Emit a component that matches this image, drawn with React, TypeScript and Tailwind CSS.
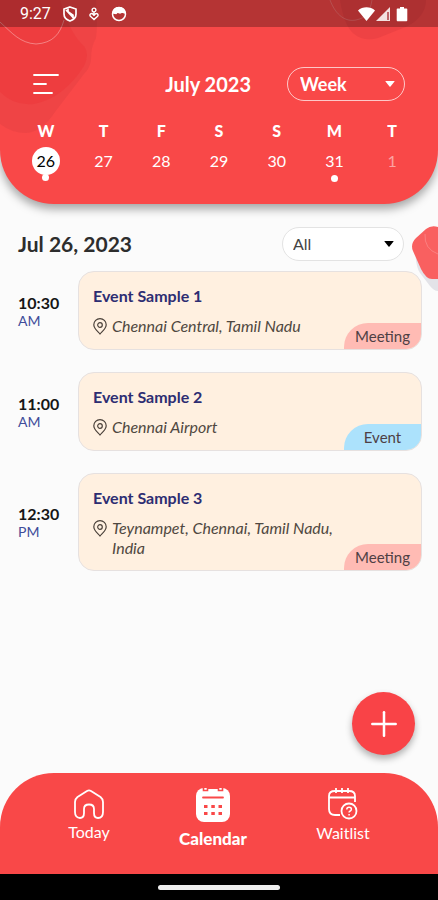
import { Plus } from "lucide-react";

const days = [
  { letter: "W", date: 26, active: true, dot: true },
  { letter: "T", date: 27 },
  { letter: "F", date: 28 },
  { letter: "S", date: 29 },
  { letter: "S", date: 30 },
  { letter: "M", date: 31, dot: true },
  { letter: "T", date: 1, muted: true },
];

const events = [
  { time: "10:30", period: "AM", title: "Event Sample 1", place: "Chennai Central, Tamil Nadu", type: "Meeting" },
  { time: "11:00", period: "AM", title: "Event Sample 2", place: "Chennai Airport", type: "Event" },
  { time: "12:30", period: "PM", title: "Event Sample 3", place: "Teynampet, Chennai, Tamil Nadu, India", type: "Meeting" },
];

const Caret = () => (
  <svg viewBox="0 0 10 6" className="pointer-events-none absolute right-2.5 top-1/2 h-1.5 w-2.5 -translate-y-1/2" fill="currentColor">
    <path d="M0.8 0h8.4q.8 0 .3.6L5.500 5.500q-.5.5-1 0L.5.6Q0 0 .8 0Z" />
  </svg>
);

const StatusBar = () => (
  <div className="relative flex h-[27px] items-center justify-between bg-black/27 pl-5 pr-[30px] text-white">
    <div className="flex items-center gap-3">
      <span className="font-[Roboto,sans-serif] text-base leading-none">9:27</span>
      <svg viewBox="0 0 14 16" className="h-4 w-3.5" fill="none" stroke="currentColor" strokeWidth="1.700">
        <path d="M7 1 13 3v5c0 3.400-2.500 5.800-6 7-3.500-1.200-6-3.600-6-7V3Z" />
        <path d="M5 2.500v3.200l5 3.600v3M3 4l8 8.500" />
      </svg>
      <svg viewBox="0 0 10 14" className="h-3.5 w-2.5" fill="none" stroke="currentColor" strokeWidth="1.400">
        <circle cx="5" cy="3" r="1.900" />
        <path d="M5 5v4M5 12.600 1.400 9.200a1.600 1.600 0 0 1 2.200-2.300L5 8.300l1.400-1.400a1.600 1.600 0 0 1 2.200 2.300Z" />
      </svg>
      <svg viewBox="0 0 16 16" className="size-4" fill="none" stroke="currentColor" strokeWidth="1.500">
        <circle cx="8" cy="8" r="6.500" />
        <path d="M2 7c.5-3 3-5.200 6-5.200S13.500 4 14 7l-3-1L9 7 6.500 6 5 7.500Z" fill="currentColor" />
      </svg>
    </div>
    <svg viewBox="0 0 50 16" className="h-4 w-[50px]" fill="currentColor">
      <path d="M0 4.500C4.500.3 12.500.3 17 4.500L8.500 15Z" />
      <path d="M18 15 32 1v14Z" opacity=".85" />
      <path d="M29 6h2v8h-2Z" fill="#a83238" opacity=".7" />
      <path d="M39.500 2.500H42V1h4v1.500h2.500q.8 0 .8.800v11q0 .9-.9.900h-8.800q-.9 0-.9-.9v-11q0-.8.800-.8Z" />
    </svg>
  </div>
);

const Header = () => (
  <header className="relative overflow-hidden rounded-b-[54px] bg-[#f94848] text-white shadow-[0_5px_10px_rgba(0,0,0,0.35)]">
    {/* soft shapes behind the header */}
    <svg viewBox="0 0 110 150" className="absolute left-0 top-0 h-[150px] w-[110px]" fill="none">
      <path d="M0 0H96Q98 24 96 38 91 46 91 60 90 68 84 74L55 112Q42 132 26 133 12 133 0 124Z" fill="#e34043" opacity=".45" />
      <path d="M0 0H60Q70 34 84 46 90 54 84 66 64 98 34 104 14 106 0 92Z" fill="#ee3639" opacity=".5" />
      <path d="M0 22C12 33 20 43 36 44 53 43 60 34 64 20" stroke="#fff" strokeOpacity=".35" />
    </svg>
    <svg viewBox="0 0 110 44" className="absolute right-0 top-0 h-11 w-[110px]" fill="none">
      <path d="M12 0Q16 26 26 34 36 42 50 38L80 26Q98 16 98 0Z" fill="#e43c3f" opacity=".5" />
      <path d="M2 0C8 16 18 22 28 20 38 18 42 12 44 0" stroke="#fff" strokeOpacity=".2" />
    </svg>
    <StatusBar />
    <div className="relative mt-10 flex items-center pl-8 pr-[33px]">
      <button aria-label="Menu" className="flex flex-1 items-center">
        <svg viewBox="0 0 28 22" className="h-[22px] w-7" stroke="currentColor" strokeWidth="1.800" strokeLinecap="round">
          <path d="M2 2h24M2 11h12M2 20h18" />
        </svg>
      </button>
      <h1 className="mr-9 text-xl font-bold leading-6">July 2023</h1>
      <div className="relative w-[118px]">
        <select aria-label="View" className="h-[34px] w-full appearance-none rounded-full border border-white/70 bg-transparent pl-3 text-lg font-bold leading-6 outline-none">
          <option>Week</option>
        </select>
        <Caret />
      </div>
    </div>
    <div className="relative mt-[18px] grid h-[85px] grid-cols-7 px-[17px]">
      {days.map((day, i) => (
        <div key={i} className="flex flex-col items-center">
          <span className="text-base font-black leading-6">{day.letter}</span>
          <button
            className={`mt-1 flex size-7 items-center justify-center rounded-full text-base leading-5 ${
              day.active ? "bg-white text-black" : ""
            } ${day.muted ? "text-white/50" : ""}`}
          >
            {day.date}
          </button>
          {day.dot && <span className={`size-[7px] rounded-full bg-white ${day.active ? "-mt-px" : ""}`} />}
        </div>
      ))}
    </div>
  </header>
);

const PinIcon = () => (
  <svg viewBox="0 0 14 17" className="mt-0.5 h-[17px] w-3.5 shrink-0" fill="none" stroke="#4a4039" strokeWidth="1.200">
    <path d="M7 16C5.500 14 .8 11 .8 6.800a6.200 6.200 0 0 1 12.400 0C13.200 11 8.500 14 7 16Z" />
    <circle cx="7" cy="7" r="2.300" />
  </svg>
);

const EventRow = ({ event }: { event: (typeof events)[number] }) => (
  <li className="flex items-center">
    <div className="w-[60px] shrink-0">
      <p className="text-base font-bold leading-5 text-[#161616]">{event.time}</p>
      <p className="text-sm leading-4 text-[#3f4d9a]">{event.period}</p>
    </div>
    <article className="relative min-h-[79px] flex-1 overflow-hidden rounded-2xl border border-[#e6e1e0] bg-[#fff0e0] px-3.5 pb-3 pt-3.5">
      <h3 className="text-base font-bold leading-5 text-[#2d2d72]">{event.title}</h3>
      <div className="mt-2.5 flex gap-[5px] pr-14">
        <PinIcon />
        <p className="text-base italic leading-5 text-[#4f4841]">{event.place}</p>
      </div>
      <span
        className={`absolute bottom-0 right-0 flex h-[26px] w-[77px] items-center justify-center rounded-tl-3xl text-[15px] text-[#4e4044] ${
          event.type === "Event" ? "bg-[#ace2fc]" : "bg-[#ffbbb4]"
        }`}
      >
        {event.type}
      </span>
    </article>
  </li>
);

const BottomNav = () => (
  <nav className="grid h-[101px] grid-cols-[126px_1fr_138px] rounded-t-[54px] bg-[#f94848] px-[26px] pt-3.5 text-white">
    <a href="#today" className="flex flex-col items-center pt-0.5 text-base leading-5">
      <svg viewBox="0 0 30 31" className="mb-0.5 h-[31px] w-[30px]" fill="none" stroke="currentColor" strokeWidth="1.800" strokeLinejoin="round">
        <path d="M13 2Q15 .8 17 2L26.500 8Q29 10 29 13v10c0 4-2 6-5 6s-4-2-4-5v-4q0-4.500-5-4.500T10 20v4c0 3-1 5-4 5s-5-2-5-6V13q0-3 2.500-5Z" />
      </svg>
      Today
    </a>
    <a href="#calendar" aria-current="page" className="flex flex-col items-center text-[17px] font-black leading-5">
      <svg viewBox="0 0 34 36" className="mb-1.5 h-9 w-[34px]">
        <rect y="1" width="34" height="34" rx="8" fill="#fff" />
        <path d="M7.500 0v3.500h4V0M22.500 0v3.500h4V0" fill="none" stroke="#f94848" strokeWidth="1.600" />
        <path d="M11.500 0h11v2h-11Z" fill="#f94848" />
        <path d="M7 10.500h20" stroke="#f94848" strokeWidth="1.800" strokeLinecap="round" />
        <path d="M8 19.500h3.500M15.300 19.500h3.500M22.500 19.500H26M8 26.500h3.500M15.300 26.500h3.500M22.500 26.500H26" stroke="#f94848" strokeWidth="3" />
      </svg>
      Calendar
    </a>
    <a href="#waitlist" className="flex flex-col items-center text-base leading-5">
      <svg viewBox="0 0 30 33" className="mb-[3px] h-[33px] w-[30px]" fill="none" stroke="currentColor" strokeWidth="1.800">
        <path d="M12 28H7Q1 28 1 22V9q0-5 6-5h14q6 0 6 5v6M1 10.500h26M8 1v5M14 1v5M20 1v5" />
        <circle cx="21" cy="24" r="7.500" />
        <path d="M18.800 22.500q0-2.200 2.300-2.200t2.300 2q0 1.200-1.500 1.900-.8.400-.8 1.300M21.100 27v1.500" strokeWidth="1.500" />
      </svg>
      Waitlist
    </a>
  </nav>
);

const App = () => {
  return (
    <div className="flex min-h-screen flex-col overflow-hidden bg-[#fbfbfb] font-[Lato,sans-serif]">
      <Header />
      <main className="relative flex-1 pl-[18px] pr-4 pt-[23px]">
        <svg viewBox="0 0 26 70" className="absolute right-0 top-[21px] h-[70px] w-[26px]">
          <path d="M3 25Q4 43 8 48L18 61Q22 66 26 66V30Z" fill="#e3e3e8" />
          <path d="M26 2Q19 0 14 4L4 13Q-2 19 1 26L9 44Q14 54 20 54H26Z" fill="#f96060" />
          <path d="M13 9Q12 24 26 29" fill="none" stroke="#fff" strokeOpacity=".2" />
        </svg>
        <div className="flex items-center justify-between pr-[18px]">
          <h2 className="text-[21px] font-bold leading-6 text-[#2d2d2d]">Jul 26, 2023</h2>
          <div className="relative w-[122px] text-black">
            <select aria-label="Filter" className="h-[34px] w-full appearance-none rounded-full border border-[#e3e3e3] bg-white pl-2.5 text-base leading-5 text-[#444] outline-none">
              <option>All</option>
            </select>
            <Caret />
          </div>
        </div>
        <ul className="mt-2.5 flex flex-col gap-[22px]">
          {events.map((event) => (
            <EventRow key={event.title} event={event} />
          ))}
        </ul>
      </main>
      <div className="flex justify-end pb-[18px] pr-[23px]">
        <button aria-label="Add event" className="flex size-[63px] items-center justify-center rounded-full bg-[#f94347] text-white shadow-[0_4px_7px_rgba(0,0,0,0.3)]">
          <Plus size={40} strokeWidth={1.5} />
        </button>
      </div>
      <BottomNav />
      <div className="flex h-[26px] items-center justify-center bg-black">
        <div className="h-[5px] w-[122px] rounded-full bg-[#eee]" />
      </div>
    </div>
  );
};

export default App;
